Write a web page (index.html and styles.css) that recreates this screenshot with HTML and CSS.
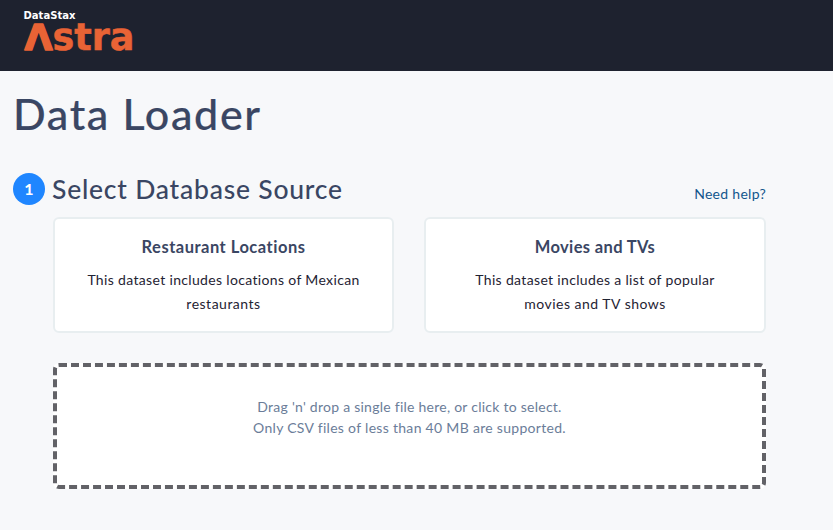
FILE: index.html
```html
<!DOCTYPE html>
<html lang="en">
<head>
<meta charset="utf-8">
<title>Data Loader</title>
<link rel="stylesheet" href="styles.css">
</head>
<body>
<header class="topbar">
  <svg class="logo" width="112" height="44" viewBox="0 0 112 44" role="img" aria-label="DataStax Astra">
    <text class="logo-brand" x="0.5" y="9.5" textLength="52" lengthAdjust="spacingAndGlyphs">DataStax</text>
    <text class="logo-a" x="1.5" y="41" textLength="28" lengthAdjust="spacingAndGlyphs">Λ</text>
    <text class="logo-name" x="29.5" y="41.3" textLength="82" lengthAdjust="spacingAndGlyphs">stra</text>
  </svg>
</header>
<main class="page">
  <h1 class="title">Data Loader</h1>
  <section class="source">
    <div class="step">
      <span class="step-number">1</span>
      <h2 class="step-title">Select Database Source</h2>
      <a class="help">Need help?</a>
    </div>
    <div class="body">
      <div class="cards">
        <article class="card">
          <h3 class="card-title">Restaurant Locations</h3>
          <p class="card-text">This dataset includes locations of Mexican<br><span class="wide">restaurants</span></p>
        </article>
        <article class="card">
          <h3 class="card-title movies">Movies and TVs</h3>
          <p class="card-text">This dataset includes a list of popular<br><span class="wide">movies and TV shows</span></p>
        </article>
      </div>
      <div class="dropzone">
        <p class="drop-hint">Drag 'n' drop a single file here, or click to select.</p>
        <p>Only CSV files of less than 40 MB are supported.</p>
      </div>
    </div>
  </section>
</main>
</body>
</html>
```
FILE: styles.css
```css
* { box-sizing: border-box; }
body {
  margin: 0;
  min-height: 530px;
  background: #f7f8fa;
  color: #1f2333;
  font-family: Lato, "Liberation Sans", sans-serif;
}
h1, h2, h3, p { margin: 0; }
.topbar { height: 71px; padding: 9px 23px; background: #1e222f; }
.logo { display: block; overflow: visible; }
.logo-brand { font: 700 10px "DejaVu Sans", sans-serif; fill: #fff; }
.logo-a { font: 700 36px "DejaVu Sans", sans-serif; fill: #e96335; stroke: #e96335; stroke-width: 1.6; stroke-linejoin: round; }
.logo-name { font: 700 37px "DejaVu Sans", sans-serif; fill: #e96335; stroke: #e96335; stroke-width: 0.5; }
.page { width: 766px; padding: 18px 0 0 13px; }
.title {
  height: 50px;
  line-height: 50px;
  font-size: 43px;
  font-weight: 500;
  letter-spacing: 1.65px;
  color: #3a4663;
  -webkit-text-stroke: 0.2px #3a4663;
}
.source { margin-top: 34px; }
.step { display: flex; height: 32px; }
.step-number {
  width: 32px;
  border-radius: 50%;
  background: #1f86ff;
  color: #fff;
  font-size: 16px;
  font-weight: 700;
  line-height: 32px;
  text-align: center;
}
.step-title {
  margin-left: 7px;
  line-height: 32px;
  font-size: 26.5px;
  font-weight: 500;
  letter-spacing: 0.78px;
  white-space: nowrap;
  color: #3a4663;
}
.help { margin-left: auto; line-height: 41px; font-size: 14px; letter-spacing: 0.3px; color: #12568d; }
.body { margin: 12px 0 0 40px; }
.cards { display: grid; grid-template-columns: 341px 342px; justify-content: space-between; }
.card {
  height: 116px;
  padding: 16px 0 0;
  border: 2px solid #e8eef0;
  border-radius: 6px;
  background: #fff;
  text-align: center;
}
.card-title { line-height: 24px; font-size: 16.5px; font-weight: 700; letter-spacing: 0.5px; color: #3a4663; }
.movies { letter-spacing: 0.35px; }
.card-text { margin-top: 9px; line-height: 24px; font-size: 14px; letter-spacing: 0.34px; }
.wide { letter-spacing: 0.5px; }
.dropzone {
  height: 126px;
  margin-top: 30px;
  padding-top: 29px;
  border: 4px dashed #626267;
  border-radius: 6px;
  background: #fff;
  color: #6b7d99;
  font-size: 14px;
  line-height: 21px;
  letter-spacing: 0.3px;
  text-align: center;
}
.drop-hint { letter-spacing: 0.25px; }
```
